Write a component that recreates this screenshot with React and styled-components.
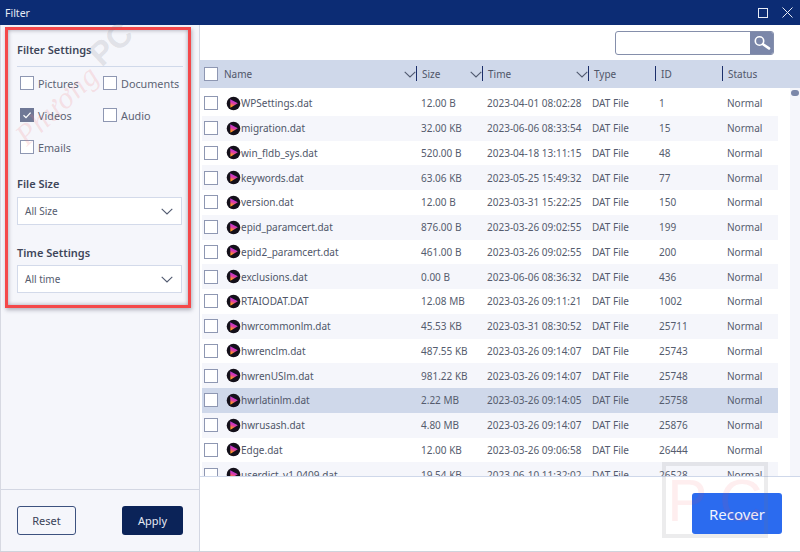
import React from "react";
import styled, { createGlobalStyle } from "styled-components";

const Global = createGlobalStyle`
  html, body { margin: 0; padding: 0; }
  body { width: 800px; height: 552px; overflow: hidden; font-family: "Noto Sans", "Open Sans", sans-serif; background: #fff; }
  * { box-sizing: border-box; }
`;

const Window = styled.div`
  position: relative; width: 800px; height: 552px; display: flex; flex-direction: column;
  border-bottom: 1px solid #d0d3dc; overflow: hidden; color: #464d60;
`;
const TitleBar = styled.div`
  height: 25px; flex: none; background: #0c2c74; color: #e8ecf5; display: flex; align-items: center;
  padding: 0 7px 0 5px; font-size: 10.5px;
`;
const TitleText = styled.span`flex: 1;`;
const WinIcons = styled.div`display: flex; align-items: center; gap: 14px;`;
const Body = styled.div`flex: 1; display: flex; min-height: 0;`;
const Sidebar = styled.aside`
  width: 200px; flex: none; background: #f5f6fb; border-right: 1px solid #d3d7e3; border-left: 1px solid #d7d9e2;
  display: flex; flex-direction: column; padding: 0 16px;
`;
const SideTop = styled.div`flex: 1; padding-top: 17px;`;
const SectionTitle = styled.div`font-size: 11px; font-weight: 600; color: #40465a; line-height: 16px;`;
const Rule = styled.div`height: 1px; background: #d0d9ea; margin: 8px 0 0;`;
const CheckGrid = styled.div`
  display: grid; grid-template-columns: 83px 1fr; grid-auto-rows: 32px; padding: 0 0 0 3px; margin: 0 0 13px;
`;
const CheckItem = styled.label`display: flex; align-items: center; gap: 4px; font-size: 10.8px; color: #5c6374; white-space: nowrap;`;
const Box = styled.span`
  width: 14px; height: 14px; flex: none; display: inline-flex; align-items: center; justify-content: center;
  border: 1px solid ${p => (p.$checked ? "#6f7896" : "#8e97b2")}; background: ${p => (p.$checked ? "#6f7896" : "#fff")};
`;
const Select = styled.div`
  width: 165px; height: 28px; background: #fff; border: 1px solid #d3daea; display: flex; align-items: center; justify-content: space-between;
  padding: 0 7px 0 7px; font-size: 10px; color: #555c6e; margin: ${p => p.$mt ?? 5}px 0 ${p => p.$mb || 0}px;
`;
const SideBottom = styled.div`
  height: 62px; flex: none; margin: 0 -16px; padding: 16px 16px 0; border-top: 1px solid #d3d7e3;
  display: flex; justify-content: space-between; align-items: flex-start;
`;
const ResetBtn = styled.button`
  width: 59px; height: 29px; border: 1px solid #3d527f; border-radius: 3px; background: #f5f6fb; color: #3a4258;
  font: 11px "Noto Sans", sans-serif; padding: 0;
`;
const ApplyBtn = styled.button`
  width: 61px; height: 29px; border: 0; border-radius: 3px; background: #0b2358; color: #e6eaf4;
  font: 11px "Noto Sans", sans-serif; padding: 0;
`;
const Main = styled.main`flex: 1; min-width: 0; display: flex; flex-direction: column;`;
const Toolbar = styled.div`height: 35px; flex: none; display: flex; justify-content: flex-end; padding: 6px 26px 0 0;`;
const Search = styled.div`
  width: 159px; height: 24px; border: 1px solid #858fab; border-radius: 3px; display: flex; justify-content: flex-end; background: #fff; overflow: hidden;
`;
const SearchBtn = styled.div`width: 23px; background: #7b87a9; display: flex; align-items: center; justify-content: center;`;
const Header = styled.div`
  height: 28px; flex: none; background: #cfd8ea; display: grid; grid-template-columns: 15px 198px 66px 106px 67px 67px 1fr; align-items: center;
  font-size: 10px; color: #4f5669; padding-left: 4px;
`;
const HCell = styled.div`
  height: 100%; display: flex; align-items: center; justify-content: space-between; position: relative; padding: 0 1px 0 ${p => p.$pl ?? 5}px;
  ${p => p.$div && "&::after { content: ''; position: absolute; right: 0; top: 6px; bottom: 7px; width: 1px; background: #1c2f6b; }"}
`;
const ListWrap = styled.div`flex: 1; min-height: 0; position: relative; display: flex; overflow: hidden;`;
const List = styled.div`width: 578px; flex: none; padding: 3px 0 0 2px; overflow: hidden;`;
const Row = styled.div`
  height: 24.75px; display: grid; grid-template-columns: 22px 190px 66px 105px 67px 68px 1fr; align-items: center; padding-left: 2px;
  font-size: 10px; color: #555c6e; white-space: nowrap;
  background: ${p => (p.$sel ? "#cfd8ea" : p.$alt ? "#f5f6fb" : "#fff")};
`;
const NameCell = styled.div`display: flex; align-items: center; color: #4f5669; font-size: 10px;`;
const Cell = styled.div`padding-left: 5px;`;
const Track = styled.div`position: absolute; right: 0; top: 0; bottom: 0; width: 10px; background: #f5f6fb;`;
const Thumb = styled.div`width: 8px; height: 6px; margin: 2px 0 0 1px; border-radius: 4px; background: #7b87a9;`;
const Footer = styled.div`
  height: 75px; flex: none; border-top: 1px solid #cfd8ea; display: flex; justify-content: flex-end; padding: 16px 18px 0 0; background: #fff;
`;
const Recover = styled.button`
  width: 90px; height: 41px; border: 0; border-radius: 3px; background: #2b6bef; color: #f0f4fe; font: 15px "Noto Sans", sans-serif; padding: 0; position: relative; z-index: 1;
`;
const Highlight = styled.div`
  position: absolute; left: 5px; top: 27px; width: 186px; height: 281px; border: 3px solid #f4484a; pointer-events: none;
  box-shadow: inset 0 0 4px rgba(90, 90, 110, .55), 1px 2px 4px rgba(90, 90, 110, .45);
`;
const MarkName = styled.div`
  position: absolute; left: 57px; top: 105px; transform: translate(-50%, -50%) rotate(-43deg); font: italic 30px "Liberation Serif", serif;
  letter-spacing: 1px; color: rgba(244, 130, 135, .2); pointer-events: none; white-space: nowrap;
`;
const MarkPc = styled.div`
  position: absolute; left: 111px; top: 44px; transform: translate(-50%, -50%) rotate(-43deg); font: 700 33px "Liberation Sans", sans-serif;
  color: rgba(120, 120, 130, .18); pointer-events: none;
`;
const MarkBox = styled.div`
  position: absolute; left: 662px; top: 462px; width: 106px; height: 76px; border: 4px solid rgba(120, 120, 125, .14);
  display: flex; align-items: center; justify-content: center; gap: 12px; font: 60px "Liberation Sans", sans-serif; color: rgba(245, 70, 80, .09); z-index: 2; pointer-events: none;
`;

const Check = () => (
  <svg width="10" height="10" viewBox="0 0 10 10"><path d="M1.5 5.2 4 7.6 8.6 2.6" fill="none" stroke="#fff" strokeWidth="1.3" /></svg>
);
const Chevron = ({ w = 12, color = "#515a70" }) => (
  <svg width={w} height="7" viewBox="0 0 12 7"><path d="M.7.8 6 6l5.3-5.2" fill="none" stroke={color} strokeWidth="1.1" /></svg>
);
const FileIcon = () => (
  <svg width="15" height="15" viewBox="0 0 15 15" style={{ flex: "none" }}>
    <defs>
      <linearGradient id="pl" x1=".55" y1="0" x2=".25" y2="1">
        <stop offset="0" stopColor="#9a30f5" /><stop offset=".5" stopColor="#e23fa0" /><stop offset=".85" stopColor="#ff9a20" />
      </linearGradient>
    </defs>
    <circle cx="7.5" cy="7.5" r="6.8" fill="#14101a" />
    <path d="M4.2 3.2 11.8 7.2 4.4 11.8z" fill="url(#pl)" />
  </svg>
);
const FILES = [
  ["WPSettings.dat", "12.00 B", "2023-04-01 08:02:28", "1"],
  ["migration.dat", "32.00 KB", "2023-06-06 08:33:54", "15"],
  ["win_fldb_sys.dat", "520.00 B", "2023-04-18 13:11:15", "48"],
  ["keywords.dat", "63.06 KB", "2023-05-25 15:49:32", "77"],
  ["version.dat", "12.00 B", "2023-03-31 15:22:25", "150"],
  ["epid_paramcert.dat", "876.00 B", "2023-03-26 09:02:55", "199"],
  ["epid2_paramcert.dat", "461.00 B", "2023-03-26 09:02:55", "200"],
  ["exclusions.dat", "0.00 B", "2023-06-06 08:36:32", "436"],
  ["RTAIODAT.DAT", "12.08 MB", "2023-03-26 09:11:21", "1002"],
  ["hwrcommonlm.dat", "45.53 KB", "2023-03-31 08:30:52", "25711"],
  ["hwrenclm.dat", "487.55 KB", "2023-03-26 09:14:07", "25743"],
  ["hwrenUSlm.dat", "981.22 KB", "2023-03-26 09:14:07", "25748"],
  ["hwrlatinlm.dat", "2.22 MB", "2023-03-26 09:14:05", "25758"],
  ["hwrusash.dat", "4.80 MB", "2023-03-26 09:14:07", "25876"],
  ["Edge.dat", "12.00 KB", "2023-03-26 09:06:58", "26444"],
  ["userdict_v1.0409.dat", "19.54 KB", "2023-06-10 11:32:02", "26528"],
];

export default function App() {
  return (
    <Window>
      <Global />
      <TitleBar>
        <TitleText>Filter</TitleText>
        <WinIcons>
          <svg width="10" height="10" viewBox="0 0 10 10"><rect x=".5" y=".5" width="9" height="9" fill="none" stroke="#e8ecf5" /></svg>
          <svg width="11" height="11" viewBox="0 0 11 11"><path d="M.5.5l10 10M10.5.5l-10 10" stroke="#e8ecf5" fill="none" /></svg>
        </WinIcons>
      </TitleBar>
      <Body>
        <Sidebar>
          <SideTop>
            <SectionTitle>Filter Settings</SectionTitle>
            <Rule />
            <CheckGrid>
              <CheckItem><Box />Pictures</CheckItem>
              <CheckItem><Box />Documents</CheckItem>
              <CheckItem><Box $checked><Check /></Box>Videos</CheckItem>
              <CheckItem><Box />Audio</CheckItem>
              <CheckItem><Box />Emails</CheckItem>
            </CheckGrid>
            <SectionTitle>File Size</SectionTitle>
            <Select $mb={20}>All Size<Chevron w={14} /></Select>
            <SectionTitle>Time Settings</SectionTitle>
            <Select $mt={4}>All time<Chevron w={14} /></Select>
          </SideTop>
          <SideBottom>
            <ResetBtn>Reset</ResetBtn>
            <ApplyBtn>Apply</ApplyBtn>
          </SideBottom>
        </Sidebar>
        <Main>
          <Toolbar>
            <Search>
              <SearchBtn>
                <svg width="18" height="16" viewBox="0 0 18 16">
                  <circle cx="6.5" cy="6" r="4.2" fill="none" stroke="#fff" strokeWidth="1.6" />
                  <path d="M10 9.2l6 4.2" stroke="#fff" strokeWidth="2.6" strokeLinecap="round" />
                </svg>
              </SearchBtn>
            </Search>
          </Toolbar>
          <Header>
            <HCell $pl={0}><Box /></HCell>
            <HCell $div>Name<Chevron /></HCell>
            <HCell $div>Size<Chevron /></HCell>
            <HCell $div>Time<Chevron /></HCell>
            <HCell $div>Type</HCell>
            <HCell $div>ID</HCell>
            <HCell>Status</HCell>
          </Header>
          <ListWrap>
            <List>
              {FILES.map((f, i) => (
                <Row key={f[0]} $alt={i % 2 === 1} $sel={i === 12}>
                  <Box />
                  <NameCell><FileIcon />{f[0]}</NameCell>
                  <Cell>{f[1]}</Cell>
                  <Cell>{f[2]}</Cell>
                  <Cell>DAT File</Cell>
                  <Cell>{f[3]}</Cell>
                  <Cell>Normal</Cell>
                </Row>
              ))}
            </List>
            <Track><Thumb /></Track>
          </ListWrap>
          <Footer><Recover>Recover</Recover></Footer>
        </Main>
      </Body>
      <Highlight />
      <MarkName>Phương</MarkName>
      <MarkPc>PC</MarkPc>
      <MarkBox><span>P</span><span>C</span></MarkBox>
    </Window>
  );
}
